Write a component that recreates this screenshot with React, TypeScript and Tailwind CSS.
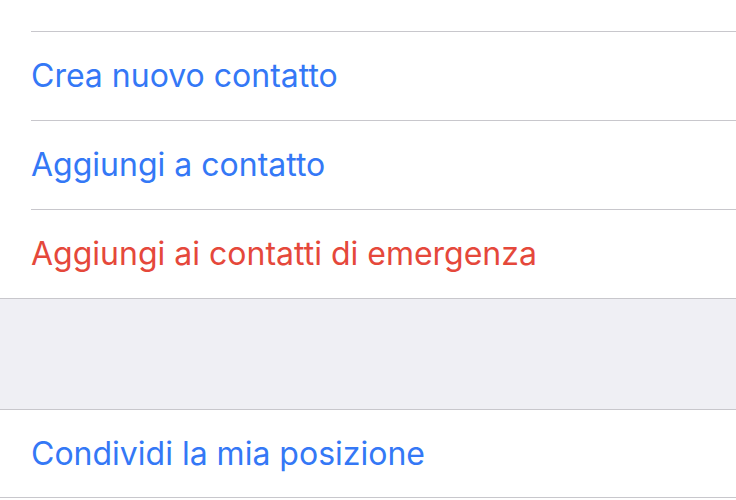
import React from "react";

const Row = ({ text, color, h = "h-[89px]", border = true }: { text: string; color: string; h?: string; border?: boolean }) => (
  <div className="pl-[31px] bg-white">
    <div className={`${h} flex items-center ${border ? "border-b border-[#c8c7cc]" : ""}`}>
      <span className={`text-[32px] leading-none ${color}`}>{text}</span>
    </div>
  </div>
);

export default function App() {
  return (
    <div
      className="w-[736px] h-[500px] overflow-hidden bg-white"
      style={{ fontFamily: "Inter, 'Noto Sans', sans-serif" }}
    >
      <div className="-mt-[57px]">
        <Row text="Chiama" color="text-[#3478f6]" />
        <Row text="Crea nuovo contatto" color="text-[#3478f6]" />
        <Row text="Aggiungi a contatto" color="text-[#3478f6]" />
        <Row text="Aggiungi ai contatti di emergenza" color="text-[#e5483b]" h="h-[88px]" border={false} />
      </div>
      <div className="h-[112px] bg-[#efeff4] border-y border-[#c8c7cc]" />
      <div className="h-[88px] flex items-center pl-[31px] bg-white border-b border-[#c8c7cc]">
        <span className="text-[32px] leading-none text-[#3478f6]">Condividi la mia posizione</span>
      </div>
    </div>
  );
}
